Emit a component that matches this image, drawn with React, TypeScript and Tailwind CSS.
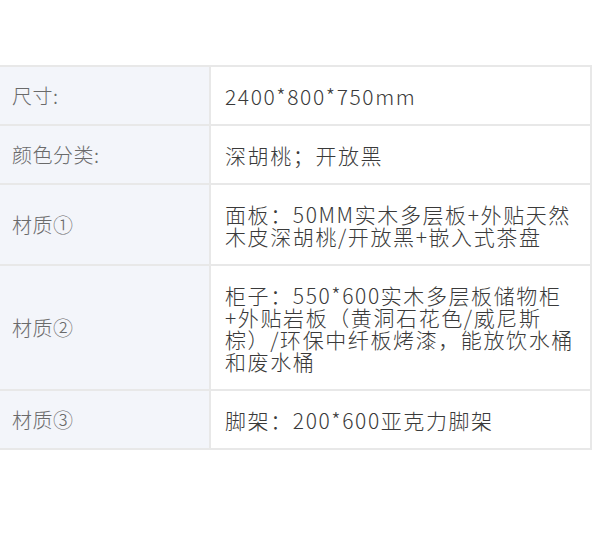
import React from 'react';

interface SpecRow {
    label: string;
    lines: string[];
}

const ROWS: SpecRow[] = [
    { label: '尺寸:', lines: ['2400*800*750mm'] },
    { label: '颜色分类:', lines: ['深胡桃；开放黑'] },
    { label: '材质①', lines: ['面板：50MM实木多层板+外贴天然', '木皮深胡桃/开放黑+嵌入式茶盘'] },
    {
        label: '材质②',
        lines: [
            '柜子：550*600实木多层板储物柜',
            '+外贴岩板（黄洞石花色/威尼斯',
            '棕）/环保中纤板烤漆，能放饮水桶',
            '和废水桶',
        ],
    },
    { label: '材质③', lines: ['脚架：200*600亚克力脚架'] },
];

const App: React.FC = () => {
    return (
        <div
            className="w-[597px] h-[535px] bg-white pt-[65px]"
            style={{ fontFamily: '"Noto Sans CJK SC", "Noto Sans", sans-serif' }}
        >
            <div className="w-[592px] border-t-2 border-r-2 border-[#e8e8e8]">
                {ROWS.map(row => (
                    <div key={row.label} className="grid grid-cols-[211px_379px] border-b-2 border-[#e8e8e8]">
                        <div className="bg-[#f3f5fa] border-r-2 border-[#e8e8e8] flex items-center pl-[12px] text-[20px] leading-[22px] text-[#6a6a6a] font-light tracking-[0.5px]">
                            {row.label}
                        </div>
                        <div className="py-[17.5px] pl-[14px] pr-[2px] text-[21px] leading-[22px] text-[#3a3a3a] font-light tracking-[1.6px]">
                            {row.lines.map((line, i) => (
                                <div key={i} className="whitespace-nowrap">{line}</div>
                            ))}
                        </div>
                    </div>
                ))}
            </div>
        </div>
    );
};

export default App;
